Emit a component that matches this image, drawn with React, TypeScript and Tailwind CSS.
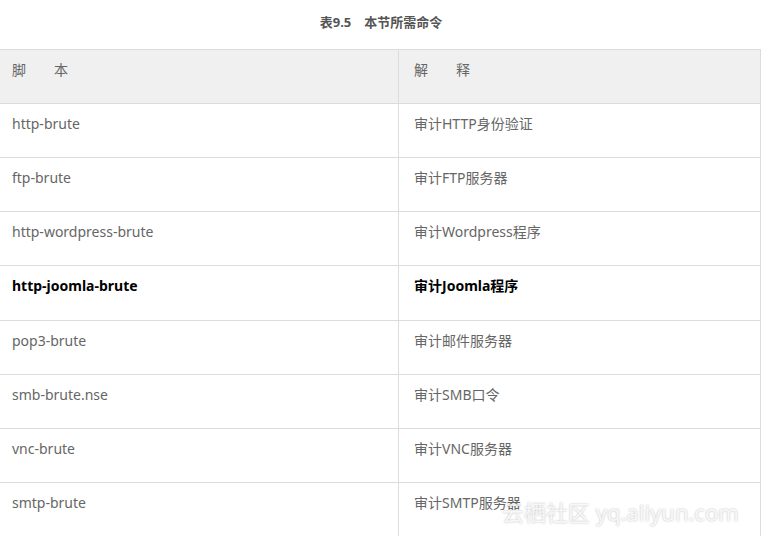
const rows = [
  { cmd: 'http-brute', desc: '审计HTTP身份验证' },
  { cmd: 'ftp-brute', desc: '审计FTP服务器' },
  { cmd: 'http-wordpress-brute', desc: '审计Wordpress程序' },
  { cmd: 'http-joomla-brute', desc: '审计Joomla程序', bold: true },
  { cmd: 'pop3-brute', desc: '审计邮件服务器' },
  { cmd: 'smb-brute.nse', desc: '审计SMB口令' },
  { cmd: 'vnc-brute', desc: '审计VNC服务器' },
  { cmd: 'smtp-brute', desc: '审计SMTP服务器' },
];

const font = { fontFamily: '"Noto Sans", "Noto Sans CJK SC", sans-serif' };

export default function App() {
  return (
    <div className="relative w-[762px] h-[536px] overflow-hidden bg-white" style={font}>
      <div className="h-[49px] flex items-center justify-center pb-[3px]">
        <span className="text-[13px] font-bold text-[#555]">表9.5　本节所需命令</span>
      </div>
      <div className="w-[761px] border-t border-r border-[#dcdcdc]">
        <div className="grid grid-cols-[399px_1fr] h-[54px] bg-[#f0f0f0] border-b border-[#dcdcdc] text-[14px] text-[#666]">
          <div className="border-r border-[#dcdcdc] pl-3 pt-[9px]">脚　　本</div>
          <div className="pl-[15px] pt-[9px]">解　　释</div>
        </div>
        {rows.map((r, i) => (
          <div
            key={i}
            className={`grid grid-cols-[399px_1fr] border-b border-[#dcdcdc] text-[14px] ${r.bold ? 'h-[55px] font-bold text-black' : 'h-[54px] text-[#666]'}`}
          >
            <div className="border-r border-[#dcdcdc] pl-3 pt-[9px]">{r.cmd}</div>
            <div className="pl-[15px] pt-[9px]">{r.desc}</div>
          </div>
        ))}
      </div>
      <div className="absolute left-[502px] top-[497px] whitespace-nowrap text-[22px] leading-[30px] text-white/85 [text-shadow:0_0_2px_rgba(0,0,0,0.3)]">
        云栖社区 yq.aliyun.com
      </div>
    </div>
  );
}
